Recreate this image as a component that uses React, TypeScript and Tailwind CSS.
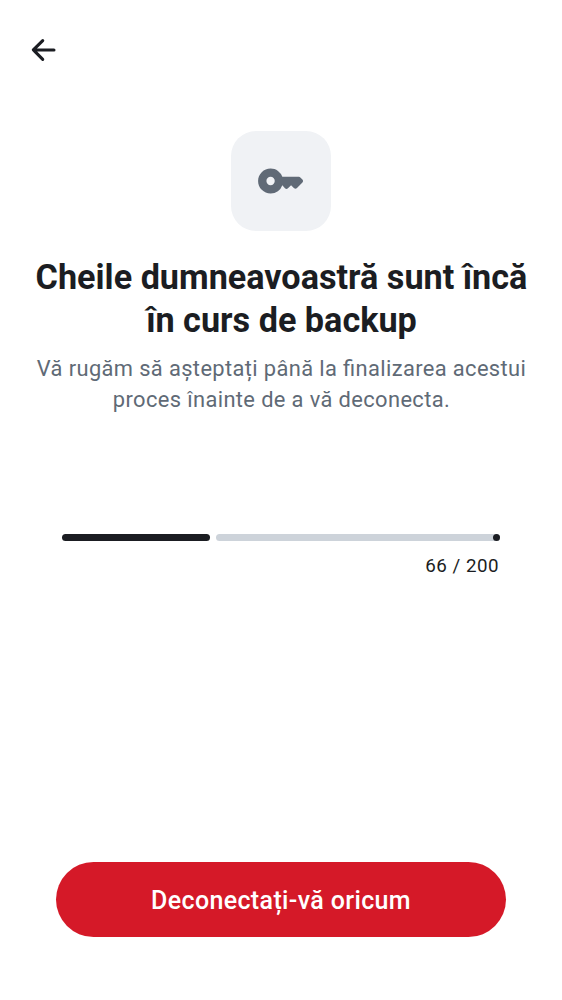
export default function App() {
  return (
    <main className="flex h-[1000px] w-full flex-col bg-white font-['Roboto',sans-serif] text-[#1b1d22]">
      <header className="flex h-[99px] items-center pl-[25px]">
        <button aria-label="Back" className="flex size-[37px] items-center justify-center">
          <svg viewBox="0 0 24 24" className="size-[37px]" fill="none" stroke="#1b1d22" strokeWidth="2" strokeLinecap="round" strokeLinejoin="round">
            <path d="M18.8 12.3H5.5M11.5 6.2 5.4 12.3l6.1 6.1" />
          </svg>
        </button>
      </header>
      <section className="mt-[32px] flex flex-col items-center text-center">
        <div className="flex size-[100px] items-center justify-center rounded-[25px] bg-[#f0f2f5]">
          <svg viewBox="0 0 24 24" className="size-[50px]" fill="#606a76">
            <path fillRule="evenodd" d="M7 18c-1.67 0-3.08-.58-4.25-1.75S1 13.67 1 12s.58-3.08 1.75-4.25S5.33 6 7 6c1.35 0 2.53.38 3.54 1.15A6 6 0 0 1 12.65 10h7.93a1 1 0 0 1 .7.3l1 1a.98.98 0 0 1 .3.7c0 .27-.1.52-.3.73l-2.6 2.62a1.1 1.1 0 0 1-1.5 0l-1.35-1.35-1.5 1.5a1.1 1.1 0 0 1-1.43 0L12.65 14a6 6 0 0 1-2.16 2.87A5.7 5.7 0 0 1 7 18m0-4c.55 0 1.02-.2 1.41-.59.39-.39.59-.86.59-1.41s-.2-1.02-.59-1.41A1.93 1.93 0 0 0 7 10c-.55 0-1.02.2-1.41.59C5.2 10.98 5 11.45 5 12s.2 1.02.59 1.41c.39.39.86.59 1.41.59" />
          </svg>
        </div>
        <h1 className="mt-[25px] pl-px text-[34.2px] leading-[42.5px] font-bold whitespace-nowrap">Cheile dumneavoastră sunt încă<br />în curs de backup</h1>
        <p className="mt-[12px] pl-px text-[21.875px] leading-[31px] tracking-[0.38px] whitespace-nowrap text-[#606a76] [font-feature-settings:'liga'_1]">Vă rugăm să așteptați până la finalizarea acestui<br />proces înainte de a vă deconecta.</p>
      </section>
      <section className="mt-[119px] px-[62px]">
        <div className="flex h-[7px] w-[438px] gap-[6px]">
          <div className="w-[148px] rounded-full bg-[#1b1d22]" />
          <div className="flex flex-1 justify-end rounded-full bg-[#cdd3da]"><span className="size-[7px] rounded-full bg-[#1b1d22]" /></div>
        </div>
        <p className="mt-[13px] pr-px text-right text-[18.75px] leading-[25px] tracking-[0.5px]">66 / 200</p>
      </section>
      <footer className="mt-auto px-[56px] pb-[63px]">
        <button className="h-[75px] w-full rounded-full bg-[#d51928] pt-[2px] text-[25px] font-medium tracking-[0.36px] text-white">Deconectați-vă oricum</button>
      </footer>
    </main>
  );
}
